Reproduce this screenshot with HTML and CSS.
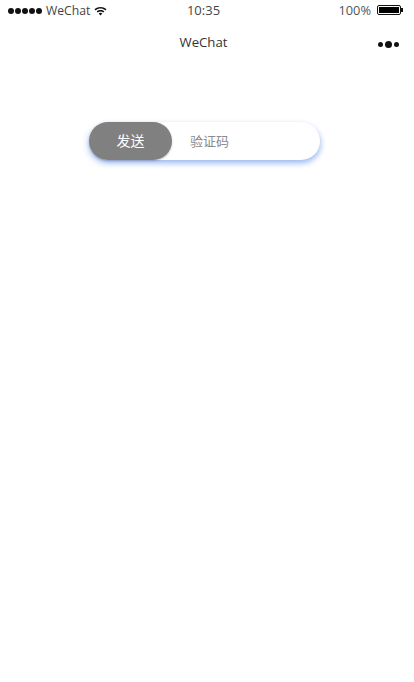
FILE: index.html
```html
<!DOCTYPE html>
<html lang="zh">
<head>
<meta charset="utf-8">
<title>WeChat</title>
<link rel="stylesheet" href="styles.css">
</head>
<body>
<div class="status">
  <div class="status-left">
    <span class="dots"><i></i><i></i><i></i><i></i><i></i></span>
    <span class="carrier">WeChat</span>
    <svg class="wifi" width="13" height="10" viewBox="0 0 13 10"><path d="M0.5 3.2C4 0.2 9 0.2 12.5 3.2L11.4 4.4C8.4 2 4.6 2 1.6 4.4Z" fill="#111"/><path d="M2.6 5.3C4.9 3.4 8.1 3.4 10.4 5.3L9.3 6.5C7.6 5.2 5.4 5.2 3.7 6.5Z" fill="#111"/><path d="M4.7 7.4C5.7 6.6 7.3 6.6 8.3 7.4L6.5 9.4Z" fill="#111"/></svg>
  </div>
  <div class="time">10:35</div>
  <div class="status-right">
    <span class="pct">100%</span>
    <span class="battery"><span class="battery-fill"></span></span><span class="battery-tip"></span>
  </div>
</div>
<div class="nav">
  <div class="nav-title">WeChat</div>
  <div class="capsule"><i class="sm"></i><i class="lg"></i><i class="sm"></i></div>
</div>
<main class="main">
  <div class="pill">
    <button class="send">发送</button>
    <span class="code">验证码</span>
  </div>
</main>
</body>
</html>
```
FILE: styles.css
```css
* { box-sizing: border-box; }
html, body { margin: 0; padding: 0; background: #fff; }
body { width: 414px; height: 682px; overflow: hidden; font-family: "Open Sans", "Noto Sans CJK SC", sans-serif; color: #333; }
.status { height: 22px; display: grid; grid-template-columns: 1fr auto 1fr; align-items: center; padding: 0 11px 1px 8px; font-size: 12px; }
.status-left { display: flex; align-items: center; gap: 4px; }
.dots { display: flex; gap: 1px; }
.dots i { width: 6px; height: 6px; border-radius: 50%; background: #111; display: block; }
.carrier { color: #444; font-size: 12.2px; }
.wifi { display: block; }
.time { font-size: 13px; color: #444; margin-right: 4px; margin-top: -1px; }
.status-right { display: flex; align-items: center; justify-content: flex-end; }
.pct { color: #555; margin-right: 6px; font-size: 12.8px; margin-top: -1px; }
.battery { width: 24px; height: 10px; border: 1px solid #111; border-radius: 2px; padding: 1px; display: block; margin-top: -1px; }
.battery-fill { display: block; height: 100%; background: #000; }
.battery-tip { width: 2px; height: 4px; background: #111; display: block; margin-top: -1px; }
.nav { height: 40px; display: flex; align-items: center; justify-content: center; position: relative; padding-right: 7px; }
.nav-title { font-size: 13.2px; color: #333; margin-top: -1px; }
.capsule { position: absolute; right: 15px; top: 19px; display: flex; align-items: center; gap: 2px; }
.capsule i { display: block; border-radius: 50%; background: #111; }
.capsule .sm { width: 5px; height: 5px; }
.capsule .lg { width: 7px; height: 7px; }
.main { padding: 60px 0 0 89px; }
.pill { width: 231px; height: 38px; border-radius: 19px; display: flex; align-items: center; background: #fff; box-shadow: -1px 3px 6px rgba(90, 140, 235, 0.45), 2px 3px 4px rgba(90, 140, 235, 0.25); }
.send { width: 83px; height: 38px; border: 0; border-radius: 19px; background: #808080; color: #fff; font: 14px/36px "Noto Sans CJK SC", sans-serif; padding: 0 0 2px; box-shadow: 0 1px 2px rgba(60,60,60,.3); }
.code { margin-left: 18px; margin-top: -2px; font: 13px "Noto Sans CJK SC", sans-serif; color: #8a8a8a; }
```
